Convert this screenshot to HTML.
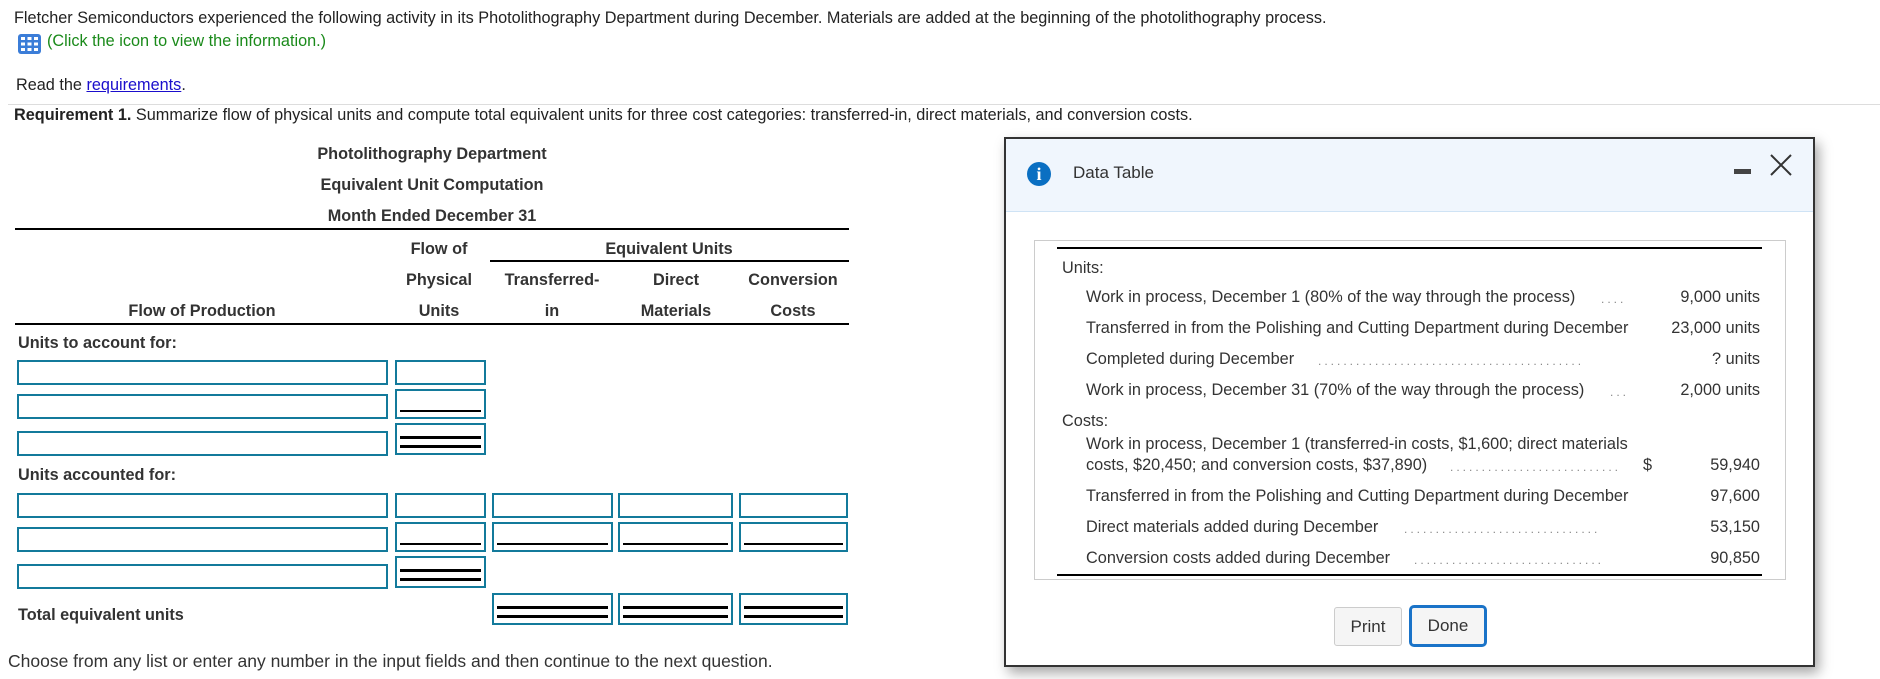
<!DOCTYPE html>
<html><head><meta charset="utf-8"><style>
*{margin:0;padding:0;box-sizing:border-box}
body{width:1880px;height:679px;background:#fff;font-family:"Liberation Sans",Arial,sans-serif;font-size:16.25px;color:#222;position:relative;overflow:hidden}
.a{position:absolute;white-space:nowrap}
.b{font-weight:bold;font-size:16.25px;color:#333}
.c{text-align:center;transform:translateX(-50%)}
.box{position:absolute;border:2px solid #137a9b;background:#fff}
.s1::after{content:"";position:absolute;left:3px;right:3px;bottom:5px;border-bottom:2px solid #000}
.s2::after{content:"";position:absolute;left:3px;right:3px;bottom:5px;height:6px;border-top:3px solid #000;border-bottom:3px solid #000}
.hl{position:absolute;background:#000;height:2px}
.dt{position:absolute;font-size:16.3px;color:#333;white-space:nowrap}
.r{text-align:right}
.dots{position:absolute;color:#888;letter-spacing:3px;font-size:12px;white-space:nowrap;overflow:hidden}
</style></head><body>
<div class="a" style="left:14px;top:9px">Fletcher Semiconductors experienced the following activity in its Photolithography Department during December. Materials are added at the beginning of the photolithography process.</div>
<svg class="a" style="left:18px;top:34px" width="23" height="20" viewBox="0 0 23 20"><rect width="23" height="20" rx="3" fill="#3b7dd8"/><g fill="#fff"><rect x="3" y="3" width="4" height="3"/><rect x="9.5" y="3" width="4" height="3"/><rect x="16" y="3" width="4" height="3"/><rect x="3" y="8.5" width="4" height="3"/><rect x="9.5" y="8.5" width="4" height="3"/><rect x="16" y="8.5" width="4" height="3"/><rect x="3" y="14" width="4" height="3"/><rect x="9.5" y="14" width="4" height="3"/><rect x="16" y="14" width="4" height="3"/></g></svg>
<div class="a" style="left:47px;top:32px;color:#1a8a1a">(Click the icon to view the information.)</div>
<div class="a" style="left:16px;top:76px">Read the <span style="color:#1a0dcc;text-decoration:underline">requirements</span>.</div>
<div class="a" style="left:8px;top:104px;width:1872px;height:1px;background:#ddd"></div>
<div class="a" style="left:14px;top:106px"><b>Requirement 1.</b> Summarize flow of physical units and compute total equivalent units for three cost categories: transferred-in, direct materials, and conversion costs.</div>

<div class="a b c" style="left:432px;top:145px">Photolithography Department</div>
<div class="a b c" style="left:432px;top:176px">Equivalent Unit Computation</div>
<div class="a b c" style="left:432px;top:207px">Month Ended December 31</div>
<div class="hl" style="left:15px;top:228px;width:834px"></div>
<div class="a b c" style="left:439px;top:240px">Flow of</div>
<div class="a b c" style="left:669px;top:240px">Equivalent Units</div>
<div class="hl" style="left:490px;top:260px;width:359px;height:1.5px"></div>
<div class="a b c" style="left:439px;top:271px">Physical</div>
<div class="a b c" style="left:552px;top:271px">Transferred-</div>
<div class="a b c" style="left:676px;top:271px">Direct</div>
<div class="a b c" style="left:793px;top:271px">Conversion</div>
<div class="a b c" style="left:202px;top:302px">Flow of Production</div>
<div class="a b c" style="left:439px;top:302px">Units</div>
<div class="a b c" style="left:552px;top:302px">in</div>
<div class="a b c" style="left:676px;top:302px">Materials</div>
<div class="a b c" style="left:793px;top:302px">Costs</div>
<div class="hl" style="left:15px;top:323px;width:834px"></div>
<div class="a b" style="left:18px;top:334px">Units to account for:</div>

<div class="box" style="left:17px;top:360px;width:371px;height:25px"></div>
<div class="box" style="left:395px;top:360px;width:91px;height:25px"></div>
<div class="box" style="left:17px;top:394px;width:371px;height:25px"></div>
<div class="box s1" style="left:395px;top:389px;width:91px;height:30px"></div>
<div class="box" style="left:17px;top:431px;width:371px;height:25px"></div>
<div class="box s2" style="left:395px;top:423px;width:91px;height:32px"></div>

<div class="a b" style="left:18px;top:466px">Units accounted for:</div>
<div class="box" style="left:17px;top:493px;width:371px;height:25px"></div>
<div class="box" style="left:395px;top:493px;width:91px;height:25px"></div>
<div class="box" style="left:492px;top:493px;width:121px;height:25px"></div>
<div class="box" style="left:618px;top:493px;width:115px;height:25px"></div>
<div class="box" style="left:739px;top:493px;width:109px;height:25px"></div>
<div class="box" style="left:17px;top:527px;width:371px;height:25px"></div>
<div class="box s1" style="left:395px;top:522px;width:91px;height:30px"></div>
<div class="box s1" style="left:492px;top:522px;width:121px;height:30px"></div>
<div class="box s1" style="left:618px;top:522px;width:115px;height:30px"></div>
<div class="box s1" style="left:739px;top:522px;width:109px;height:30px"></div>
<div class="box" style="left:17px;top:564px;width:371px;height:25px"></div>
<div class="box s2" style="left:395px;top:556px;width:91px;height:32px"></div>

<div class="a b" style="left:18px;top:606px">Total equivalent units</div>
<div class="box s2" style="left:492px;top:593px;width:121px;height:32px"></div>
<div class="box s2" style="left:618px;top:593px;width:115px;height:32px"></div>
<div class="box s2" style="left:739px;top:593px;width:109px;height:32px"></div>
<div class="a" style="left:8px;top:651px;font-size:17.5px;color:#333">Choose from any list or enter any number in the input fields and then continue to the next question.</div>

<!-- dialog -->
<div class="a" style="left:1004px;top:137px;width:811px;height:530px;border:2px solid #333;background:#fff;box-shadow:4px 6px 12px rgba(0,0,0,.35)">
 <div style="position:absolute;left:0;top:0;right:0;height:73px;background:#f0f6fd;border-bottom:1px solid #cfe3f5"></div>
</div>
<div class="a" style="left:1027px;top:162px;width:24px;height:24px;border-radius:50%;background:#0a6fc2;color:#fff;font-weight:bold;font-family:'Liberation Serif',serif;font-size:18px;text-align:center;line-height:24px">i</div>
<div class="a" style="left:1073px;top:163px;font-size:17px;color:#333">Data Table</div>
<div class="a" style="left:1734px;top:169px;width:17px;height:5px;background:#444"></div>
<svg class="a" style="left:1769px;top:154px" width="24" height="22"><path d="M2 1 L22 21 M22 1 L2 21" stroke="#333" stroke-width="2"/></svg>

<div class="a" style="left:1034px;top:240px;width:752px;height:340px;border:1px solid #ccc"></div>
<div class="hl" style="left:1057px;top:247px;width:705px;height:1.5px"></div>
<div class="hl" style="left:1057px;top:574px;width:705px;height:1.5px"></div>
<div class="dt" style="left:1062px;top:259px">Units:</div>
<div class="dt" style="left:1086px;top:288px">Work in process, December 1 (80% of the way through the process)</div>
<div class="dots" style="left:1601px;top:292px;width:32px">....</div>
<div class="dt r" style="right:120px;top:288px">9,000 units</div>
<div class="dt" style="left:1086px;top:319px">Transferred in from the Polishing and Cutting Department during December</div>
<div class="dt r" style="right:120px;top:319px">23,000 units</div>
<div class="dt" style="left:1086px;top:350px">Completed during December</div>
<div class="dots" style="left:1318px;top:354px;width:315px">..........................................</div>
<div class="dt r" style="right:120px;top:350px">? units</div>
<div class="dt" style="left:1086px;top:381px">Work in process, December 31 (70% of the way through the process)</div>
<div class="dots" style="left:1610px;top:385px;width:24px">...</div>
<div class="dt r" style="right:120px;top:381px">2,000 units</div>
<div class="dt" style="left:1062px;top:412px">Costs:</div>
<div class="dt" style="left:1086px;top:435px">Work in process, December 1 (transferred-in costs, $1,600; direct materials</div>
<div class="dt" style="left:1086px;top:456px">costs, $20,450; and conversion costs, $37,890)</div>
<div class="dots" style="left:1450px;top:460px;width:190px">...........................</div>
<div class="dt" style="left:1643px;top:456px">$</div>
<div class="dt r" style="right:120px;top:456px">59,940</div>
<div class="dt" style="left:1086px;top:487px">Transferred in from the Polishing and Cutting Department during December</div>
<div class="dt r" style="right:120px;top:487px">97,600</div>
<div class="dt" style="left:1086px;top:518px">Direct materials added during December</div>
<div class="dots" style="left:1404px;top:522px;width:230px">...............................</div>
<div class="dt r" style="right:120px;top:518px">53,150</div>
<div class="dt" style="left:1086px;top:549px">Conversion costs added during December</div>
<div class="dots" style="left:1414px;top:553px;width:220px">..............................</div>
<div class="dt r" style="right:120px;top:549px">90,850</div>

<div class="a" style="left:1334px;top:607px;width:68px;height:39px;border:1px solid #ccc;border-radius:3px;background:#f5f5f5;text-align:center;line-height:37px;font-size:17px;color:#333">Print</div>
<div class="a" style="left:1409px;top:605px;width:78px;height:42px;border:3px solid #1a73c8;border-radius:5px;background:#f5f5f5;text-align:center;line-height:36px;font-size:17px;color:#333">Done</div>
</body></html>
